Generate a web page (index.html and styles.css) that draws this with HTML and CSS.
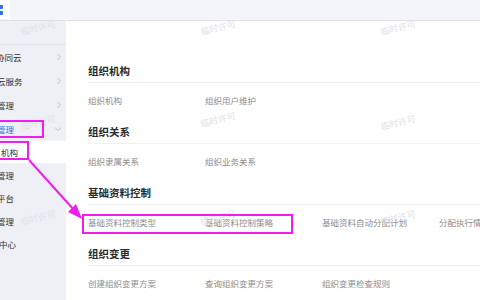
FILE: index.html
```html
<!DOCTYPE html>
<html lang="zh">
<head>
<meta charset="utf-8">
<link rel="stylesheet" href="styles.css">
</head>
<body>
<div class="page">
  <header class="topbar">
    <div class="logo">
      <span class="sq"></span>
      <span class="sq"></span>
    </div>
  </header>
  <div class="body">
    <nav class="sidebar">
      <div class="side-top"></div>
      <div class="item"><span class="label cut4">协同云</span><svg class="chev" width="6" height="8" viewBox="0 0 6 8"><polyline points="1.5,1 4.5,4 1.5,7" fill="none" stroke="#bfc1c9" stroke-width="1"/></svg></div>
      <div class="item"><span class="label cut2">云服务</span><svg class="chev" width="6" height="8" viewBox="0 0 6 8"><polyline points="1.5,1 4.5,4 1.5,7" fill="none" stroke="#bfc1c9" stroke-width="1"/></svg></div>
      <div class="item"><span class="label cut1">管理</span><svg class="chev" width="6" height="8" viewBox="0 0 6 8"><polyline points="1.5,1 4.5,4 1.5,7" fill="none" stroke="#bfc1c9" stroke-width="1"/></svg></div>
      <div class="item active"><span class="label cut1">管理</span><svg class="chev down" width="8" height="6" viewBox="0 0 8 6"><polyline points="1,1.5 4,4.5 7,1.5" fill="none" stroke="#bfc1c9" stroke-width="1"/></svg></div>
      <div class="sub selected"><span class="label sub-l">机构</span></div>
      <div class="sub"><span class="label cut1">管理</span></div>
      <div class="sub"><span class="label cut1">平台</span></div>
      <div class="sub"><span class="label cut1">管理</span></div>
      <div class="sub"><span class="label cut0">中心</span></div>
    </nav>
    <main class="main">
      <section class="sec">
        <h2 class="sec-title">组织机构</h2>
        <div class="links">
          <span>组织机构</span>
          <span>组织用户维护</span>
        </div>
      </section>
      <section class="sec">
        <h2 class="sec-title">组织关系</h2>
        <div class="links">
          <span>组织隶属关系</span>
          <span>组织业务关系</span>
        </div>
      </section>
      <section class="sec">
        <h2 class="sec-title">基础资料控制</h2>
        <div class="links">
          <span>基础资料控制类型</span>
          <span>基础资料控制策略</span>
          <span>基础资料自动分配计划</span>
          <span>分配执行情况</span>
        </div>
      </section>
      <section class="sec">
        <h2 class="sec-title">组织变更</h2>
        <div class="links">
          <span>创建组织变更方案</span>
          <span>查询组织变更方案</span>
          <span>组织变更检查规则</span>
        </div>
      </section>
    </main>
  </div>

  <div class="wm w1">临时许可</div>
  <div class="wm w2">临时许可</div>
  <div class="wm w3">临时许可</div>
  <div class="wm w4">临时许可</div>
  <div class="wm w5">临时许可</div>
  <div class="wm w6">临时许可</div>
  <div class="wm w7">临时许可</div>
  <div class="wm w8">临时许可</div>
  <div class="wm w9">临时许可</div>

  <div class="mark m1"></div>
  <div class="mark m2"></div>
  <div class="mark m3"></div>
  <svg class="arrow" width="480" height="300" viewBox="0 0 480 300">
    <line x1="29" y1="160" x2="74" y2="210" stroke="#f01df0" stroke-width="2"/>
    <polygon points="82,219 68,212 76,204" fill="#f01df0"/>
  </svg>
</div>
</body>
</html>
```
FILE: styles.css
```css
html, body {
  margin: 0;
  padding: 0;
  background: #ffffff;
}
body {
  font-family: "Noto Sans CJK SC", "Noto Sans", sans-serif;
}
.page {
  position: relative;
  width: 480px;
  height: 300px;
  overflow: hidden;
}
.topbar {
  height: 20px;
  background: #f4f5f9;
  border-bottom: 1px solid #dde0e8;
  display: flex;
}
.logo {
  width: 10px;
  height: 19px;
  background: #ffffff;
  display: flex;
  flex-direction: column;
  gap: 2px;
  padding-top: 5px;
  box-sizing: border-box;
}
.sq {
  display: block;
  width: 3px;
  height: 4px;
  background: #2f6ff0;
  border-radius: 0 1px 1px 0;
}
.body {
  display: flex;
  height: 279px;
}
.sidebar {
  width: 66px;
  flex: none;
  background: #eef0f6;
  display: flex;
  flex-direction: column;
  overflow: hidden;
}
.side-top {
  height: 23px;
  border-bottom: 1px solid #e1e3ea;
  flex: none;
}
.item, .sub {
  position: relative;
  display: flex;
  align-items: center;
  flex: none;
  font-size: 8.5px;
  color: #333;
  white-space: nowrap;
}
.item { height: 24px; }
.sub { height: 23px; }
.sub.selected {
  background: #ffffff;
  height: 22px;
}
.label { display: block; }
.cut4 { margin-left: -4px; }
.cut2 { margin-left: -3px; }
.cut1 { margin-left: -3px; }
.cut0 { margin-left: -1px; }
.sub-l { margin-left: 1px; }
.item.active { color: #2d6fe6; }
.chev {
  position: absolute;
  left: 56px;
  top: 8px;
}
.chev.down {
  left: 54px;
  top: 9px;
}
.main {
  flex: 1;
  background: #ffffff;
  padding: 39px 0 0 22px;
}
.sec {
  height: 61px;
}
.sec-title {
  margin: 0;
  height: 22px;
  line-height: 22px;
  font-size: 10.5px;
  font-weight: bold;
  color: #2a2a2a;
  border-bottom: 1px solid #efeff2;
}
.links {
  display: grid;
  grid-template-columns: 117px 117px 117px 117px;
  padding-top: 8px;
  height: 18px;
  line-height: 18px;
  font-size: 8.5px;
  color: #8d8d8d;
  white-space: nowrap;
}
.wm {
  position: absolute;
  font-size: 9px;
  color: #e2e2e6;
  transform: rotate(-14deg);
  white-space: nowrap;
  font-family: "Noto Sans CJK SC", sans-serif;
}
.w1 { left: 20px; top: 21px; }
.w2 { left: 200px; top: 21px; }
.w3 { left: 380px; top: 21px; }
.w4 { left: 20px; top: 116px; }
.w5 { left: 200px; top: 113px; }
.w6 { left: 380px; top: 116px; }
.w7 { left: 20px; top: 211px; }
.w8 { left: 200px; top: 211px; }
.w9 { left: 380px; top: 211px; }
.mark {
  position: absolute;
  border: 2px solid #f01df0;
  box-sizing: border-box;
}
.m1 { left: -2px; top: 120px; width: 46px; height: 18px; }
.m2 { left: -2px; top: 141px; width: 31px; height: 19px; }
.m3 { left: 82px; top: 214px; width: 211px; height: 20px; }
.arrow {
  position: absolute;
  left: 0;
  top: 0;
}
```
